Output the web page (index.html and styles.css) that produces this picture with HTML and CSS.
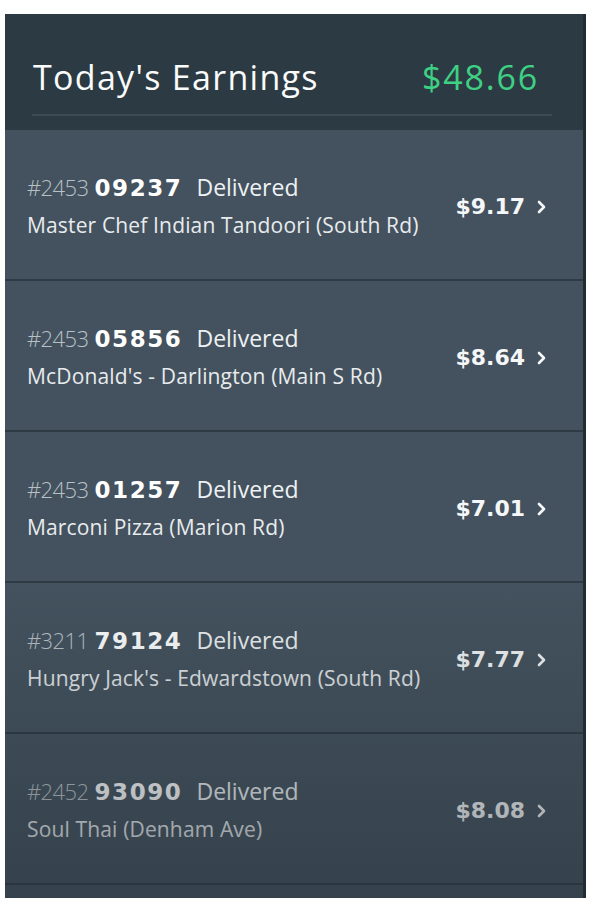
FILE: index.html
```html
<!DOCTYPE html>
<html lang="en">
<head>
    <meta charset="UTF-8">
    <meta name="viewport" content="width=device-width, initial-scale=1.0">
    <title>Today's Earnings</title>
    <link rel="stylesheet" href="styles.css">
</head>
<body>
    <div class="phone">
        <div class="earnings-header">
            <div class="earnings-title">
                <h1>Today's Earnings</h1>
                <span class="earnings-total">$48.66</span>
            </div>
        </div>

        <ul class="orders">
            <li class="order">
                <div class="order-info">
                    <div class="order-line"><span class="order-prefix">#2453</span> <b>09237</b> <span class="order-status">Delivered</span></div>
                    <div class="order-store">Master Chef Indian Tandoori (South Rd)</div>
                </div>
                <div class="order-amount">$9.17 <svg class="chevron" viewBox="0 0 10 14"><path d="M2 2l5 5-5 5"/></svg></div>
            </li>
            <li class="order">
                <div class="order-info">
                    <div class="order-line"><span class="order-prefix">#2453</span> <b>05856</b> <span class="order-status">Delivered</span></div>
                    <div class="order-store">McDonald's - Darlington (Main S Rd)</div>
                </div>
                <div class="order-amount">$8.64 <svg class="chevron" viewBox="0 0 10 14"><path d="M2 2l5 5-5 5"/></svg></div>
            </li>
            <li class="order">
                <div class="order-info">
                    <div class="order-line"><span class="order-prefix">#2453</span> <b>01257</b> <span class="order-status">Delivered</span></div>
                    <div class="order-store">Marconi Pizza (Marion Rd)</div>
                </div>
                <div class="order-amount">$7.01 <svg class="chevron" viewBox="0 0 10 14"><path d="M2 2l5 5-5 5"/></svg></div>
            </li>
            <li class="order">
                <div class="order-info">
                    <div class="order-line"><span class="order-prefix">#3211</span> <b>79124</b> <span class="order-status">Delivered</span></div>
                    <div class="order-store">Hungry Jack's - Edwardstown (South Rd)</div>
                </div>
                <div class="order-amount">$7.77 <svg class="chevron" viewBox="0 0 10 14"><path d="M2 2l5 5-5 5"/></svg></div>
            </li>
            <li class="order">
                <div class="order-info">
                    <div class="order-line"><span class="order-prefix">#2452</span> <b>93090</b> <span class="order-status">Delivered</span></div>
                    <div class="order-store">Soul Thai (Denham Ave)</div>
                </div>
                <div class="order-amount">$8.08 <svg class="chevron" viewBox="0 0 10 14"><path d="M2 2l5 5-5 5"/></svg></div>
            </li>
            <li class="order"></li>
        </ul>

        <div class="fade"></div>
    </div>
</body>
</html>
```

FILE: styles.css
```css
body {
    margin: 0;
    background: #fff;
    font-family: 'Open Sans', 'Noto Sans', sans-serif;
    color: #f1f3f4;
    overflow: hidden;
}

.phone {
    position: relative;
    width: 578px;
    height: 884px;
    margin: 14px 0 0 5px;
    border-right: 3px solid #222c33;
    background: #2c3a44;
    overflow: hidden;
}

.earnings-header {
    height: 116px;
    padding: 0 31px 0 27px;
    box-sizing: border-box;
}

.earnings-title {
    display: flex;
    justify-content: space-between;
    align-items: baseline;
    padding: 41px 13px 15px 1px;
    border-bottom: 2px solid #3d4b55;
}

.earnings-title h1 {
    margin: 0;
    font-size: 34px;
    font-weight: 500;
    line-height: 44px;
    letter-spacing: 1.3px;
    color: #fafbfb;
}

.earnings-total {
    font-size: 34px;
    font-weight: 500;
    line-height: 44px;
    letter-spacing: 1.8px;
    color: #3ed083;
}

.orders {
    list-style: none;
    margin: 0;
    padding: 0;
}

.order {
    display: flex;
    align-items: center;
    justify-content: space-between;
    height: 149px;
    padding: 0 36px 0 22px;
    background: #43525e;
    border-bottom: 2px solid #2e3b45;
}

.order-info {
    margin-top: 2px;
}

.order-line {
    font-size: 23px;
    line-height: 28px;
    color: #eef1f3;
}

.order-line b {
    font-family: 'DejaVu Sans', sans-serif;
    font-size: 23px;
    font-weight: 700;
    letter-spacing: 1.6px;
    color: #fff;
    margin-right: 8px;
}

.order-prefix {
    font-size: 22px;
    letter-spacing: -0.6px;
    color: #b9c1c7;
    font-weight: 300;
}

.order-store {
    margin-top: 10px;
    font-size: 21px;
    line-height: 26px;
    letter-spacing: 0.15px;
    color: #e8ebed;
}

.order-amount {
    display: flex;
    align-items: center;
    font-family: 'DejaVu Sans', sans-serif;
    font-size: 22px;
    font-weight: 700;
    color: #f5f7f8;
    margin-top: 4px;
}

.chevron {
    width: 10px;
    height: 14px;
    margin-left: 12px;
    fill: none;
    stroke: #f5f7f8;
    stroke-width: 2.6;
    stroke-linecap: round;
    stroke-linejoin: round;
}

.fade {
    position: absolute;
    left: 0;
    right: 0;
    bottom: 0;
    height: 320px;
    background: linear-gradient(to bottom, rgba(36, 46, 54, 0), rgba(36, 46, 54, 0.45));
    pointer-events: none;
}
```
